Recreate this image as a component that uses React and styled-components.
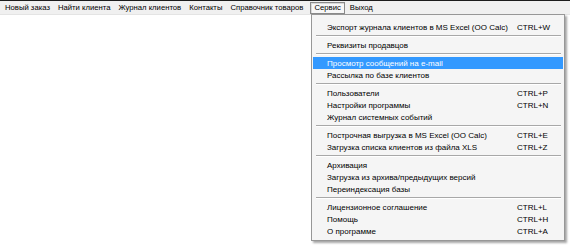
import React from "react";
import styled, { createGlobalStyle } from "styled-components";

const GlobalStyle = createGlobalStyle`
  html, body {
    margin: 0;
    padding: 0;
    background: #ffffff;
  }
  body {
    font-family: "Liberation Sans", Arial, sans-serif;
    font-size: 8px;
    color: #000;
  }
`;

const Page = styled.div`
  position: relative;
  width: 570px;
  height: 246px;
  overflow: hidden;
  background: #fff;
`;

const MenuBar = styled.div`
  display: flex;
  align-items: center;
  height: 13px;
  padding: 0 0 0 1px;
  background: #f0f0f0;
  border-top: 1px solid #1c1c1c;
  border-bottom: 1px solid #e4e4e4;
`;

const TopItem = styled.div`
  height: 12px;
  display: flex;
  align-items: center;
  padding: 0 ${(p) => (p.$open ? "3px" : "4px")};
  margin: 0 ${(p) => (p.$open ? "1px 0 3px" : "0")};
  box-sizing: border-box;
  white-space: nowrap;
  font-size: 7.7px;
  border: ${(p) => (p.$open ? "1px solid #8a8a8a" : "none")};
  background: ${(p) => (p.$open ? "#f7f7f7" : "transparent")};
  box-shadow: ${(p) => (p.$open ? "inset 1px 1px 0 #d8d8d8" : "none")};
`;

const Dropdown = styled.div`
  position: absolute;
  left: 311px;
  top: 14px;
  width: 254px;
  box-sizing: border-box;
  padding: 6px 1px 3px 1px;
  background: #f5f5f5;
  border: 1px solid #979797;
  box-shadow: 2px 2px 2px rgba(0, 0, 0, 0.35);
`;

const Row = styled.div`
  display: grid;
  grid-template-columns: 1fr 30px;
  align-items: center;
  height: 12px;
  padding: 0 16px 0 14px;
  white-space: nowrap;
  background: ${(p) => (p.$active ? "#3399ff" : "transparent")};
  color: ${(p) => (p.$active ? "#ffffff" : "#000000")};
`;

const Shortcut = styled.span`
  text-align: left;
`;

const Separator = styled.div`
  height: 0;
  margin: 2px 2px 2px 3px;
  border-top: 1px solid #a8a8a8;
  border-bottom: 1px solid #ffffff;
`;

const topItems = [
  { label: "Новый заказ" },
  { label: "Найти клиента" },
  { label: "Журнал клиентов" },
  { label: "Контакты" },
  { label: "Справочник товаров" },
  { label: "Сервис", open: true },
  { label: "Выход" },
];

const menu = [
  ["Экспорт журнала клиентов в MS Excel (OO Calc)", "CTRL+W"],
  "-",
  ["Реквизиты продавцов"],
  "-",
  ["Просмотр сообщений на e-mail", "", true],
  ["Рассылка по базе клиентов"],
  "-",
  ["Пользователи", "CTRL+P"],
  ["Настройки программы", "CTRL+N"],
  ["Журнал системных событий"],
  "-",
  ["Построчная выгрузка в MS Excel (OO Calc)", "CTRL+E"],
  ["Загрузка списка клиентов из файла XLS", "CTRL+Z"],
  "-",
  ["Архивация"],
  ["Загрузка из архива/предыдущих версий"],
  ["Переиндексация базы"],
  "-",
  ["Лицензионное соглашение", "CTRL+L"],
  ["Помощь", "CTRL+H"],
  ["О программе", "CTRL+A"],
];

const App = () => {
  return (
    <Page>
      <GlobalStyle />
      <MenuBar>
        {topItems.map((item) => (
          <TopItem key={item.label} $open={item.open}>
            {item.label}
          </TopItem>
        ))}
      </MenuBar>

      <Dropdown>
        {menu.map((entry, i) =>
          entry === "-" ? (
            <Separator key={i} />
          ) : (
            <Row key={i} $active={entry[2]}>
              <span>{entry[0]}</span>
              <Shortcut>{entry[1]}</Shortcut>
            </Row>
          )
        )}
      </Dropdown>
    </Page>
  );
};

export default App;
